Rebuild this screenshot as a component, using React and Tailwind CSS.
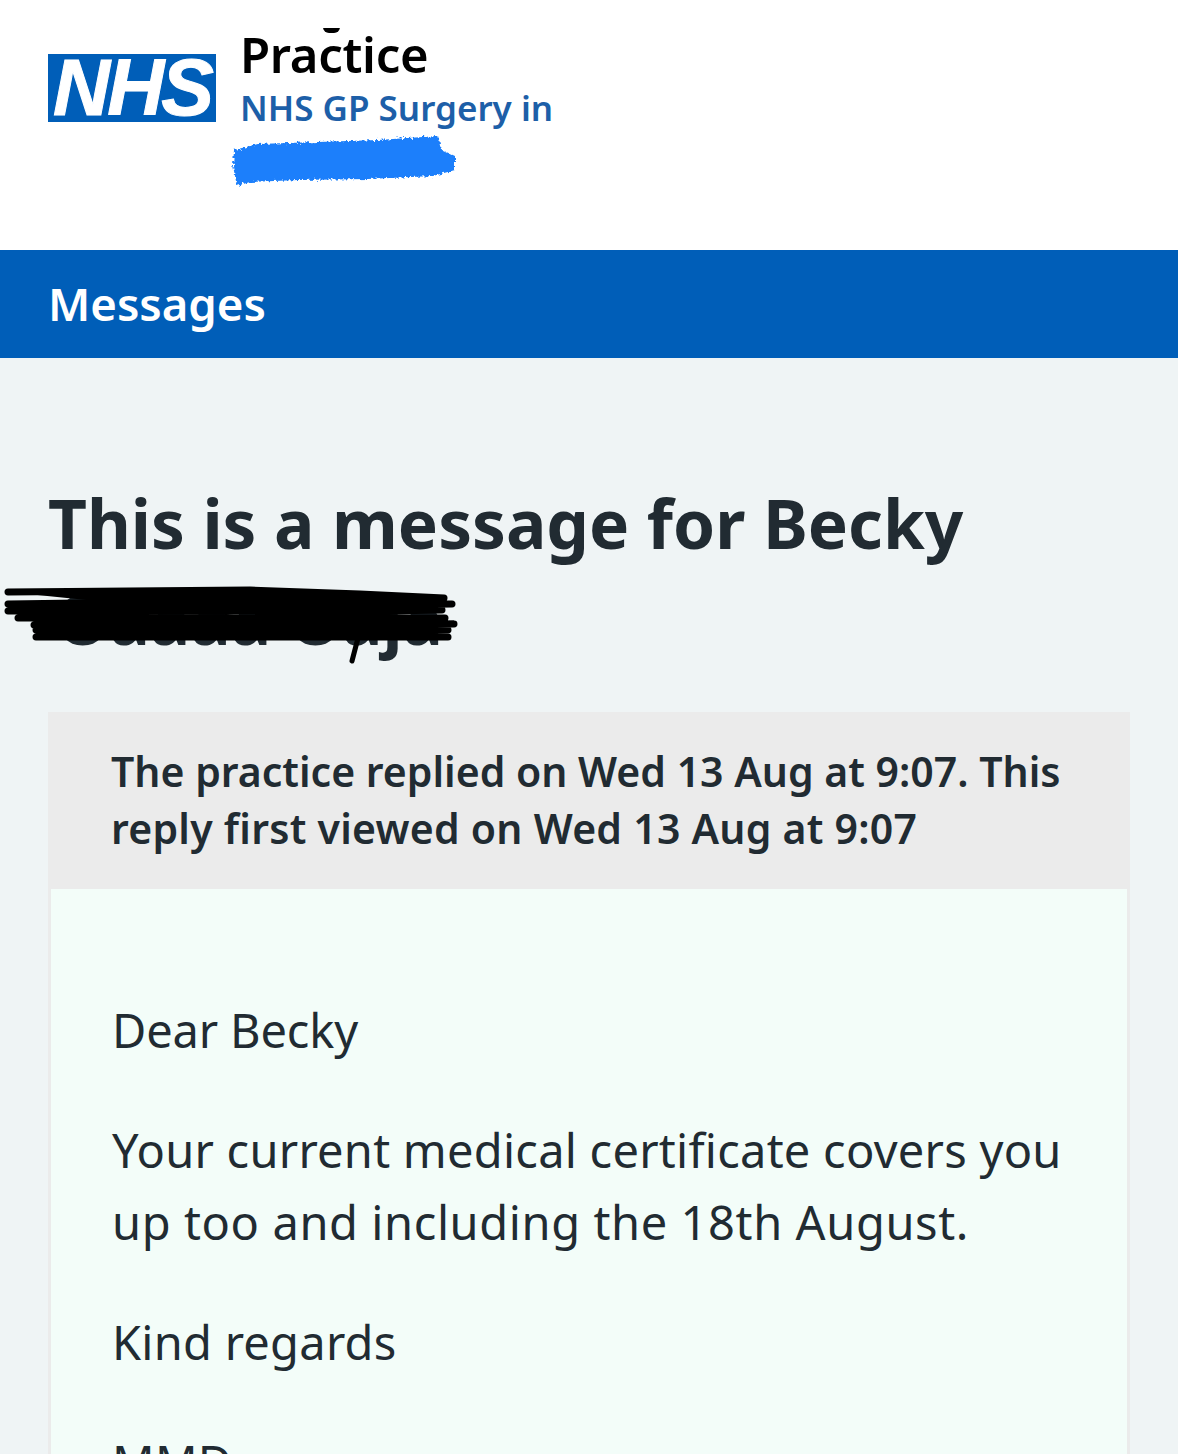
import React from 'react';

// redaction marks sitting on top of the screenshot
const BlueScribble = () => (
    <svg className="absolute left-[228px] top-[130px]" width="232" height="60" viewBox="0 0 232 60">
        <defs>
            <filter id="rough" x="-5%" y="-20%" width="110%" height="140%">
                <feTurbulence type="fractalNoise" baseFrequency="0.35" numOctaves="2" seed="4" />
                <feDisplacementMap in="SourceGraphic" scale="6" />
                <feGaussianBlur stdDeviation="0.6" />
            </filter>
        </defs>
        <path
            d="M6 20 L30 14 L90 12 L150 10 L210 6 L214 20 L227 26 L227 40 L205 46 L140 49 L70 50 L22 52 L9 56 L5 36 Z"
            fill="#1b7ffb"
            filter="url(#rough)"
        />
    </svg>
);

const BlackScribble = () => (
    <svg className="absolute left-0 top-[580px]" width="470" height="90" viewBox="0 0 470 90">
        <path d="M8 12 L250 10 L360 14 L444 18 L8 24 L452 24 L8 31 L442 30 L18 38 L445 38 L34 45 L454 44 L36 50 L448 50 L36 57 L448 57" fill="#000" stroke="#000" strokeWidth="7" strokeLinecap="round" strokeLinejoin="round" />
        <path d="M358 58 L352 81" fill="none" stroke="#000" strokeWidth="5" strokeLinecap="round" />
        <rect x="112" y="8" width="8" height="6" fill="#000" />
    </svg>
);

export default function App() {
    return (
        <div className="relative h-[1454px] w-[1178px] overflow-hidden bg-[#eff4f5] font-['Noto_Sans',sans-serif] text-[#212b32]">
            {/* Header */}
            <header className="flex h-[250px] items-start gap-[26px] bg-white pl-[48px]">
                <div className="mt-[54px] flex h-[68px] w-[168px] items-center justify-center bg-[#005eb8]">
                    <span className="font-['Liberation_Sans',sans-serif] text-[79px] font-bold italic leading-[68px] tracking-[-3px] text-white [-webkit-text-stroke:1px_white]">NHS</span>
                </div>
                <div className="pt-[23px]">
                    <div className="ml-[-2px] text-[49px] font-semibold leading-[62px] tracking-[-0.3px] text-black">Practice</div>
                    <div className="ml-[-2px] text-[35px] font-semibold leading-[46px] text-[#1d5fa8]">NHS GP Surgery in</div>
                </div>
            </header>
            <div className="absolute left-[323px] top-[27px] h-[6px] w-[17px] rounded-b-full bg-black [clip-path:inset(1px_0_0_0)]" />
            <BlueScribble />

            {/* Title bar */}
            <div className="flex h-[108px] items-center bg-[#005eb8] pl-[48px]">
                <h1 className="text-[45.5px] font-semibold leading-none text-white">Messages</h1>
            </div>

            {/* Content */}
            <main className="px-[48px] pt-[124px]">
                <h2 className="text-[67.5px] font-bold leading-[82px]">This is a message for Becky</h2>
                <div className="mt-[14px] pl-[8px] text-[67.5px] font-bold leading-[82px]">Oaaaa Oaja</div>

                <section className="mt-[52px] border-x-[3px] border-[#ebebeb]">
                    <div className="bg-[#ebebeb] pb-[32px] pl-[60px] pr-[40px] pt-[31px] text-[41px] font-semibold leading-[57px]">
                        The practice replied on Wed 13 Aug at 9:07. This <span className="tracking-[0.25px]">reply first viewed on Wed 13 Aug at 9:07</span>
                    </div>
                    <div className="bg-[#f3fdf9] pl-[61px] pr-[40px] pt-[105px] text-[47px] leading-[72px] tracking-[0.25px]">
                        <p className="tracking-[-0.15px]">Dear Becky</p>
                        <p className="mt-[48px]">Your current medical certificate covers you <span className="tracking-[0.6px]">up too and including the 18th August.</span></p>
                        <p className="mt-[48px]">Kind regards</p>
                        <p className="mt-[48px]">MMD</p>
                    </div>
                </section>
            </main>
            <BlackScribble />
        </div>
    );
}
